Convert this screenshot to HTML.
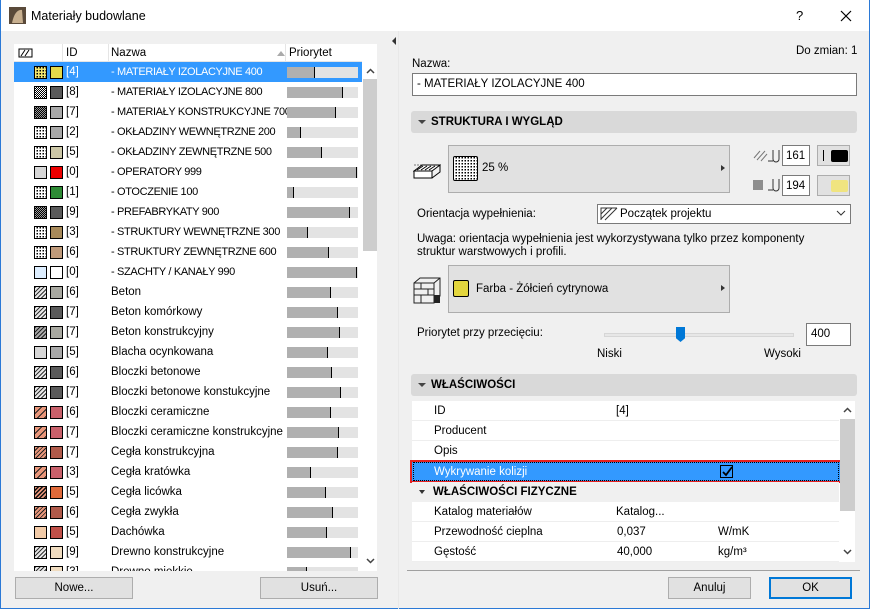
<!DOCTYPE html><html><head><meta charset="utf-8"><style>
*{box-sizing:border-box;margin:0;padding:0}
body{width:870px;height:609px;overflow:hidden;background:#f0f0f0;font-family:"Liberation Sans",sans-serif;font-size:11.5px;color:#000;position:relative}
.a{position:absolute}
#frame{left:0;top:0;width:870px;height:609px;border:1px solid #2b79d6;border-top:none}
#title{left:1px;top:0;width:868px;height:31px;background:#fff}
.row{position:absolute;left:14px;width:348px;height:20px}
.sw{position:absolute;top:4px;width:13px;height:13px;border:1px solid #000}
.id{position:absolute;left:52px;top:4px;font-size:11.5px}
.nm{position:absolute;left:97px;top:4px;white-space:nowrap;font-size:11.5px}
.nm.up{font-size:11px;letter-spacing:-0.35px}
.bar{position:absolute;left:273px;top:5px;width:71px;height:11px;background:#e3e3e3}
.bar i{position:absolute;left:0;top:0;height:11px;background:#b0b0b0;border-right:1.5px solid #000}
.btn{position:absolute;background:#e1e1e1;border:1px solid #adadad;text-align:center;line-height:20px}
.sect{position:absolute;left:411px;width:446px;height:22px;background:#d9d9d9;border-radius:3px;font-weight:bold;line-height:22px;padding-left:20px}
.sect:before{content:"";position:absolute;left:7px;top:9px;border:4px solid transparent;border-top:4px solid #444}
.inp{position:absolute;background:#fff;border:1px solid #7a7a7a;padding-left:4px;line-height:20px}
.prow{position:absolute;left:412px;width:427px;height:20px;background:#fff;border-bottom:1px solid #eee}
.prow span{position:absolute;top:4px}
</style></head><body>
<div class="a" id="title"></div>
<div class="a" id="frame"></div>
<svg class="a" style="left:9px;top:7px" width="17" height="17"><rect width="17" height="17" fill="#5a4a3a"/><path d="M3 16 Q6 2 13 3 L14 16 Z" fill="#c8b090"/></svg>
<div class="a" style="left:31px;top:9px;font-size:12.5px">Materiały budowlane</div>
<div class="a" style="left:796px;top:8px;font-size:13px">?</div>
<svg class="a" style="left:840px;top:10px" width="12" height="12"><path d="M1 1L11 11M11 1L1 11" stroke="#000" stroke-width="1.2"/></svg>

<div class="a" style="left:14px;top:44px;width:363px;height:527px;background:#fff"></div>
<div class="a" style="left:14px;top:44px;width:348px;height:18px;background:#fff;border-bottom:1px solid #e5e5e5"></div>
<svg class="a" style="left:18px;top:47px" width="16" height="12"><rect x="1" y="2" width="13" height="8" fill="none" stroke="#000"/><path d="M3 9l4-6M7 9l4-6" stroke="#000"/></svg>
<div class="a" style="left:66px;top:47px">ID</div>
<div class="a" style="left:111px;top:47px">Nazwa</div>
<div class="a" style="left:277px;top:51px;border:4px solid transparent;border-bottom:5px solid #aaa;border-top:none"></div>
<div class="a" style="left:289px;top:47px">Priorytet</div>
<div class="a" style="left:62px;top:44px;width:1px;height:18px;background:#e5e5e5"></div>
<div class="a" style="left:108px;top:44px;width:1px;height:18px;background:#e5e5e5"></div>
<div class="a" style="left:285px;top:44px;width:1px;height:18px;background:#e5e5e5"></div>
<div class="a" style="left:363px;top:79px;width:14px;height:172px;background:#cdcdcd"></div>
<svg class="a" style="left:366px;top:68px" width="9" height="6"><path d="M1 5l3.5-3.5L8 5" stroke="#444" stroke-width="1.5" fill="none"/></svg>
<svg class="a" style="left:366px;top:558px" width="9" height="6"><path d="M1 1l3.5 3.5L8 1" stroke="#444" stroke-width="1.5" fill="none"/></svg>
<div id="list" class="a" style="left:0;top:0;width:362px;height:571px;overflow:hidden"></div>
<div class="btn" style="left:15px;top:577px;width:118px;height:22px">Nowe...</div>
<div class="btn" style="left:260px;top:577px;width:118px;height:22px">Usuń...</div>

<div class="a" style="left:392px;top:37px;border:4px solid transparent;border-right:4px solid #333;border-left:none"></div>
<div class="a" style="left:398px;top:31px;width:1px;height:578px;background:#e8e8e8"></div>

<div class="a" style="left:796px;top:45px">Do zmian: 1</div>
<div class="a" style="left:412px;top:58px">Nazwa:</div>
<div class="inp" style="left:412px;top:73px;width:445px;height:23px">- MATERIAŁY IZOLACYJNE 400</div>
<div class="sect" style="top:111px">STRUKTURA I WYGLĄD</div>

<svg class="a" style="left:413px;top:157px" width="28" height="26"><path d="M1 8h26l-1 1" stroke="#777" stroke-dasharray="2 1" fill="none"/><path d="M1 14l8-6h18l-8 6z" fill="#fff" stroke="#000"/><path d="M4 13l6-4M8 13l6-4M12 13l6-4M16 13l6-4" stroke="#000"/><rect x="1" y="14" width="18" height="7" fill="#fff" stroke="#000"/><path d="M19 21l8-6v-7" stroke="#000" fill="none"/></svg>
<div class="btn" style="left:448px;top:145px;width:282px;height:48px;text-align:left"></div>
<div class="a" style="left:453px;top:156px;width:25px;height:25px;border:1px solid #000;border-radius:2px;background:repeating-conic-gradient(#000 0 25%,#fff 0 100%) 0 0/3px 3px"></div>
<div class="a" style="left:482px;top:162px">25 %</div>
<div class="a" style="left:721px;top:165px;border:3px solid transparent;border-left:4px solid #333;border-right:none"></div>
<svg class="a" style="left:753px;top:148px" width="28" height="16"><path d="M1 10l6-7M4 12l8-9M8 13l6-7" stroke="#777"/><path d="M15 13h5M20 2v9a3 3 0 0 0 6 0V2" stroke="#333" fill="none"/></svg>
<div class="inp" style="left:782px;top:145px;width:28px;height:21px;padding-left:3px">161</div>
<div class="btn" style="left:817px;top:145px;width:33px;height:21px"><div class="a" style="left:5px;top:4px;width:1px;height:11px;background:#000"></div><div class="a" style="left:13px;top:4px;width:17px;height:12px;background:#000;border-radius:2px"></div></div>
<svg class="a" style="left:753px;top:177px" width="28" height="16"><rect x="0" y="3" width="10" height="10" fill="#8e8e8e"/><path d="M15 13h5M20 2v9a3 3 0 0 0 6 0V2" stroke="#333" fill="none"/></svg>
<div class="inp" style="left:782px;top:175px;width:28px;height:21px;padding-left:3px">194</div>
<div class="btn" style="left:817px;top:175px;width:33px;height:21px"><div class="a" style="left:13px;top:4px;width:17px;height:12px;background:#f0e480;border-radius:2px"></div></div>

<div class="a" style="left:417px;top:208px">Orientacja wypełnienia:</div>
<div class="inp" style="left:597px;top:204px;width:254px;height:20px;line-height:18px;padding-left:22px">Początek projektu</div>
<svg class="a" style="left:600px;top:207px" width="18" height="14"><path d="M1 13V1h16M1 7l6-6M1 12l11-11M5 13l12-12" stroke="#333" fill="none"/></svg>
<svg class="a" style="left:836px;top:210px" width="10" height="6"><path d="M1 1l4 4 4-4" stroke="#333" fill="none"/></svg>
<div class="a" style="left:417px;top:233px;line-height:13px">Uwaga: orientacja wypełnienia jest wykorzystywana tylko przez komponenty<br>struktur warstwowych i profili.</div>

<svg class="a" style="left:413px;top:275px" width="30" height="30"><path d="M1 8h20v20H1zM1 14h20M1 20h20M8 8v6M15 14v6M8 20v8M1 8l6-5h20v18l-6 6M21 8l6-5" stroke="#222" fill="none"/><rect x="21" y="20" width="6" height="8" fill="#222"/></svg>
<div class="btn" style="left:448px;top:265px;width:282px;height:48px"></div>
<div class="a" style="left:453px;top:280px;width:16px;height:17px;background:#e3d63e;border:1px solid #000;border-radius:2px"></div>
<div class="a" style="left:476px;top:283px">Farba - Żółcień cytrynowa</div>
<div class="a" style="left:721px;top:285px;border:3px solid transparent;border-left:4px solid #333;border-right:none"></div>

<div class="a" style="left:417px;top:327px">Priorytet przy przecięciu:</div>
<div class="a" style="left:604px;top:333px;width:190px;height:4px;background:#e7e7e7;border:1px solid #d6d6d6"></div>
<div class="a" style="left:676px;top:327px;width:9px;height:15px;background:#0078d7;clip-path:polygon(0 0,100% 0,100% 75%,50% 100%,0 75%)"></div>
<div class="inp" style="left:806px;top:323px;width:45px;height:23px">400</div>
<div class="a" style="left:597px;top:348px">Niski</div>
<div class="a" style="left:764px;top:348px">Wysoki</div>

<div class="sect" style="top:374px">WŁAŚCIWOŚCI</div>
<div class="a" style="left:412px;top:401px;width:443px;height:161px;background:#fff"></div>
<div class="prow" style="top:401px"><span style="left:22px">ID</span><span style="left:204px">[4]</span></div>
<div class="prow" style="top:421px"><span style="left:22px">Producent</span></div>
<div class="prow" style="top:441px"><span style="left:22px">Opis</span></div>
<div class="a" style="left:410px;top:460px;width:432px;height:23px;border:2px solid #e52020;background:#3399ff"><div class="a" style="left:1px;top:0;right:1px;bottom:0;border:1px dotted #000"></div><span class="a" style="left:22px;top:4px;color:#fff">Wykrywanie kolizji</span><div class="a" style="left:308px;top:3px;width:13px;height:13px;border:1px solid #000;background:#3399ff"></div><svg class="a" style="left:310px;top:4px" width="11" height="11"><path d="M1 6l3 3 6-8" stroke="#000" stroke-width="1.8" fill="none"/></svg></div>
<div class="a" style="left:412px;top:482px;width:427px;height:20px;background:#f0f0f0;font-weight:bold;padding:4px 0 0 21px">WŁAŚCIWOŚCI FIZYCZNE</div>
<div class="a" style="left:419px;top:490px;border:3.5px solid transparent;border-top:4px solid #333"></div>
<div class="prow" style="top:502px"><span style="left:22px">Katalog materiałów</span><span style="left:204px">Katalog...</span></div>
<div class="prow" style="top:522px"><span style="left:22px">Przewodność cieplna</span><span style="left:205px">0,037</span><span style="left:306px">W/mK</span></div>
<div class="prow" style="top:542px"><span style="left:22px">Gęstość</span><span style="left:205px">40,000</span><span style="left:306px">kg/m³</span></div>
<div class="a" style="left:840px;top:419px;width:15px;height:92px;background:#cdcdcd"></div>
<svg class="a" style="left:843px;top:407px" width="9" height="6"><path d="M1 5l3.5-3.5L8 5" stroke="#444" stroke-width="1.5" fill="none"/></svg>
<svg class="a" style="left:843px;top:549px" width="9" height="6"><path d="M1 1l3.5 3.5L8 1" stroke="#444" stroke-width="1.5" fill="none"/></svg>
<div class="a" style="left:407px;top:570px;width:453px;height:1px;background:#a0a0a0"></div>
<div class="btn" style="left:668px;top:577px;width:83px;height:22px">Anuluj</div>
<div class="btn" style="left:769px;top:577px;width:83px;height:22px;border:2px solid #0078d7;line-height:18px">OK</div>

<script>
var d=[
["d","#e3d84a","[4]","- MATERIAŁY IZOLACYJNE 400",315,1],
["c","#5a5a5a","[8]","- MATERIAŁY IZOLACYJNE 800",343],
["c2","#a8a8a8","[7]","- MATERIAŁY KONSTRUKCYJNE 700",336],
["d","#a8a8a8","[2]","- OKŁADZINY WEWNĘTRZNE 200",301],
["d","#cbc6a6","[5]","- OKŁADZINY ZEWNĘTRZNE 500",322],
["s#d6d6d6","#ee0000","[0]","- OPERATORY 999",357],
["d","#2e8b35","[1]","- OTOCZENIE 100",294],
["c2","#5a5a5a","[9]","- PREFABRYKATY 900",350],
["d","#a88a5a","[3]","- STRUKTURY WEWNĘTRZNE 300",308],
["d","#bf9a7a","[6]","- STRUKTURY ZEWNĘTRZNE 600",329],
["s#ddeeff","#ffffff","[0]","- SZACHTY / KANAŁY 990",357],
["h","#a8a8a0","[6]","Beton",331],
["h","#5a5a5a","[7]","Beton komórkowy",338],
["h2","#a8a8a0","[7]","Beton konstrukcyjny",340],
["s#d6d6d6","#a8a8a8","[5]","Blacha ocynkowana",328],
["h","#5a5a5a","[6]","Bloczki betonowe",332],
["h","#5a5a5a","[7]","Bloczki betonowe konstukcyjne",341],
["r","#c8606a","[6]","Bloczki ceramiczne",331],
["r","#c8606a","[7]","Bloczki ceramiczne konstrukcyjne",339],
["r2","#b05a4a","[7]","Cegła konstrukcyjna",338],
["r","#c8606a","[3]","Cegła kratówka",311],
["r3","#e06a3a","[5]","Cegła licówka",326],
["r2","#b05a4a","[6]","Cegła zwykła",333],
["s#f2cba8","#c05048","[5]","Dachówka",327],
["h","#f0dcc0","[9]","Drewno konstrukcyjne",351],
["h","#f0dcc0","[3]","Drewno miękkie",307]];
var h="";
d.forEach(function(r,i){var y=62+i*20;var sel=r[5];
var p=r[0],st;
if(p=="d")st="background:repeating-conic-gradient(#000 0 25%,"+(sel?"#f5e870":"#fff")+" 0 100%) 0 0/3px 3px";
else if(p=="c")st="background:repeating-conic-gradient(#000 0 25%,#fff 0 50%) 0 0/2px 2px";
else if(p=="c2")st="background:repeating-conic-gradient(#000 0 25%,#999 0 50%) 0 0/2px 2px";
else if(p[0]=="s")st="background:"+p.slice(1);
else if(p=="h")st="background:repeating-linear-gradient(135deg,#333 0 1px,#e8e8e8 1px 3px)";
else if(p=="h2")st="background:repeating-linear-gradient(135deg,#222 0 1px,#aaa 1px 3px)";
else if(p=="r")st="background:repeating-linear-gradient(135deg,#e9967a 0 4px,#222 4px 5px)";
else if(p=="r2")st="background:repeating-linear-gradient(135deg,#e9967a 0 2px,#222 2px 3px)";
else st="background:repeating-linear-gradient(135deg,#e9967a 0 1.5px,#111 1.5px 3px)";
var up=r[3][0]=="-"?" up":"";
h+='<div class="row" style="top:'+y+'px;'+(sel?'background:#3399ff;width:348px':'')+'"><div class="sw" style="left:20px;'+st+'"></div><div class="sw" style="left:36px;background:'+r[1]+'"></div><div class="id" style="color:'+(sel?'#fff':'#000')+'">'+r[2]+'</div><div class="nm'+up+'" style="color:'+(sel?'#fff':'#000')+'">'+r[3]+'</div><div class="bar"><i style="width:'+(r[4]-287)+'px"></i></div></div>';});
document.getElementById("list").innerHTML=h;
</script>
</body></html>
